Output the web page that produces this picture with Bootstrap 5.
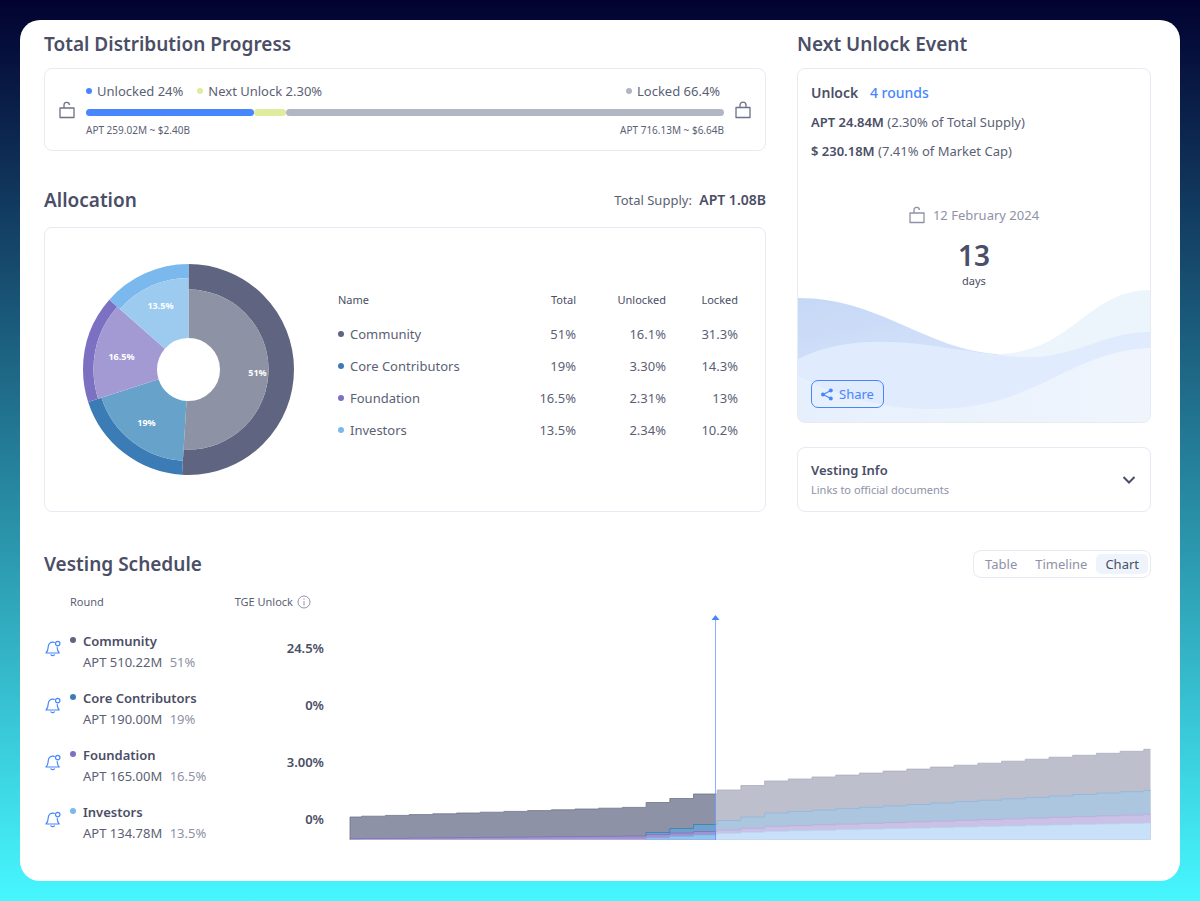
<!DOCTYPE html>
<html lang="en">
<head>
<meta charset="utf-8">
<meta name="viewport" content="width=device-width, initial-scale=1">
<title>APT Token Vesting</title>
<link href="https://cdn.jsdelivr.net/npm/bootstrap@5.3.0/dist/css/bootstrap.min.css" rel="stylesheet">
<style>
:root{--ink:#4a4e66;--soft:#5b5f75;--muted:#8e92a6;--line:#e5eaf3;--blue:#4786ff;
--community:#5f6480;--core:#3c7cb6;--foundation:#7b70c2;--investors:#7bb8ee}
body{font-family:"Noto Sans",sans-serif;font-size:13px;line-height:20px;color:var(--soft);
background:linear-gradient(#020230,#46f7ff);min-height:100vh;padding:20px}
.panel{background:#fff;border-radius:20px;padding:12px 29px 30px 24px}
h2{font-size:19px;line-height:24px;font-weight:600;color:var(--ink);margin:0}
.overview{display:grid;grid-template-columns:1fr;gap:31px}
.box{border:1px solid var(--line);border-radius:8px;background:#fff}
.strong{font-weight:600;color:var(--ink)}
.soft-note{color:var(--muted)}
.tiny{font-size:10px;line-height:16px;margin-top:6px}
.hd{font-size:11px;font-weight:400}
.dot{width:6px;height:6px;border-radius:50%;display:inline-block;flex:none}
.supply-progress{padding:12px 14px;gap:11px}
.legend-set{gap:14px}
.legend-item{display:flex;align-items:center;gap:5px}
.track{height:7px}
.track span{border-radius:4px}
.locked-col{width:98px}
.c-unlocked{background:var(--blue)}.c-next{background:#dfeb9d}.c-locked{background:#b1b6c5}
.c-community{background:var(--community)}.c-core{background:var(--core)}
.c-foundation{background:var(--foundation)}.c-investors{background:var(--investors)}
.gap-box{margin-top:12px}
.alloc-head{margin-top:37px;margin-bottom:15px}
.alloc-box{min-height:285px;padding:20px 26px 20px 38px;gap:43px}
.donut{width:211px;flex:none}
.donut text{font-size:9px;font-weight:700;fill:#fff;text-anchor:middle}
.alloc-table{width:100%;margin-bottom:5px}
.alloc-table thead th{padding-bottom:8px;color:var(--ink)}
.alloc-table tbody tr{height:32px}
.alloc-table .dot{margin-right:6px;vertical-align:2px}
.event{min-height:355px;padding:14px 13px;overflow:hidden}
.event-lines{gap:9px}
.event .waves{left:0;bottom:0;width:100%;height:133px}
.lead-line{font-size:14px}
.countdown{margin-top:44px;margin-bottom:24px}
.days-num{font-size:28px;line-height:34px;margin-top:13px}
.days-txt{font-size:11px;line-height:18px;color:var(--ink)}
a{color:var(--blue);text-decoration:none}
.share{border:1px solid var(--blue);color:var(--blue);border-radius:7px;font-size:13px;line-height:20px;padding:3px 9px;gap:6px;background:transparent}
.docs{margin-top:24px;padding:11px 13px;color:inherit;min-height:65px}
.docs small{font-size:11px}
.schedule-head{margin-top:38px;margin-bottom:10px}
.views{padding:3px 2px}
.views button{border:0;background:none;border-radius:5px;padding:0 9px;line-height:20px;color:var(--muted)}
.views button.active{background:#eff4fc;color:var(--ink)}
.schedule{display:grid;grid-template-columns:1fr;gap:24px}
.rounds{width:100%;max-width:281px}
.rounds th{padding:4px 0 11px}
.rounds .tge{padding-right:14px}
.rounds tbody tr{height:57px}
.rounds .pct{padding-bottom:9px}
.rounds .bell{width:26px;padding:0 0 10px 1px}
.rounds .bell button{border:0;background:none;padding:0;display:block}
.round-line{line-height:21px}
.round-cell{padding-left:13px;position:relative}
.round-cell .dot{position:absolute;left:0;top:14px}
.hist{width:100%;height:auto;display:block}
svg{flex:none}
@media(min-width:992px){
.overview{grid-template-columns:722fr 354fr}
.schedule{grid-template-columns:281px 1fr}}
</style>
</head>
<body>
<svg class="d-none">
<symbol id="open-lock" viewBox="0 0 16 18"><path d="M1 7h14v9.500H1zM5 7V4.200a2.700 2.700 0 0 1 5.400-.2" fill="none" stroke="currentColor" stroke-width="1.300" stroke-linejoin="round"/></symbol>
<symbol id="shut-lock" viewBox="0 0 16 18"><path d="M1 6.500h14V16.500H1zM5 6.500V4.200a3 3 0 0 1 6 0v2.300" fill="none" stroke="currentColor" stroke-width="1.300" stroke-linejoin="round"/></symbol>
<symbol id="bell-icon" viewBox="0 0 16 17"><path d="M9.300 2.400C5.500 1.400 3.300 3.800 3.200 7c-.1 3-.6 4.400-2.200 6h13.200c-1.300-1.300-1.900-2.800-2-5.500M6 14.800c.8 1 2.600 1 3.400 0" fill="none" stroke="#4786ff" stroke-width="1.200" stroke-linecap="round" stroke-linejoin="round"/><circle cx="12.700" cy="3.600" r="2.200" fill="none" stroke="#4786ff" stroke-width="1.200"/></symbol>
</svg>
<main class="panel">
<div class="overview">
<section class="d-flex flex-column">
<h2>Total Distribution Progress</h2>
<div class="box gap-box supply-progress d-flex align-items-center">
<svg width="16" height="18" color="#6d7189"><use href="#open-lock"/></svg>
<div class="flex-fill">
<div class="d-flex justify-content-between mb-2">
<div class="legend-set d-flex"><span class="legend-item"><i class="dot c-unlocked"></i>Unlocked 24%</span><span class="legend-item"><i class="dot c-next"></i>Next Unlock 2.30%</span></div>
<span class="locked-col legend-item"><i class="dot c-locked"></i>Locked 66.4%</span>
</div>
<div class="track d-flex"><span class="c-unlocked" style="width:26.4%"></span><span class="c-next" style="width:4.9%"></span><span class="c-locked" style="width:68.7%"></span></div>
<div class="tiny d-flex justify-content-between"><span>APT 259.02M ~ $2.40B</span><span>APT 716.13M ~ $6.64B</span></div>
</div>
<svg width="16" height="18" color="#6d7189"><use href="#shut-lock"/></svg>
</div>
<div class="alloc-head d-flex justify-content-between align-items-center"><h2>Allocation</h2><div>Total Supply: <span class="strong lead-line ms-1">APT 1.08B</span></div></div>
<div class="box alloc-box d-flex align-items-center flex-fill">
<svg class="donut" viewBox="-105.5 -105.5 211 211" role="img" aria-label="Allocation by round">
<g transform="rotate(-90)" fill="none">
<g stroke-dasharray="51 49"><circle r="92.750" pathLength="100" stroke="#5f6480" stroke-width="25.500"/><circle r="55.750" pathLength="100" stroke="#8e92a5" stroke-width="48.500"/></g>
<g stroke-dasharray="19 81" stroke-dashoffset="-51"><circle r="98.500" pathLength="100" stroke="#3c7cb6" stroke-width="14"/><circle r="61.500" pathLength="100" stroke="#66a2c9" stroke-width="60"/></g>
<g stroke-dasharray="16.500 83.500" stroke-dashoffset="-70"><circle r="100.250" pathLength="100" stroke="#7b70c2" stroke-width="10.500"/><circle r="63.250" pathLength="100" stroke="#a39ad4" stroke-width="63.500"/></g>
<g stroke-dasharray="13.500 86.500" stroke-dashoffset="-86.500"><circle r="98.500" pathLength="100" stroke="#7bb8ee" stroke-width="14"/><circle r="61.500" pathLength="100" stroke="#9dcbf0" stroke-width="60"/></g>
</g>
<text x="69" y="6">51%</text><text x="-42" y="56">19%</text><text x="-67" y="-10">16.5%</text><text x="-28" y="-61">13.5%</text>
</svg>
<table class="alloc-table">
<colgroup><col><col style="width:80px"><col style="width:90px"><col style="width:72px"></colgroup>
<thead><tr class="hd"><th class="fw-normal">Name</th><th class="fw-normal text-end">Total</th><th class="fw-normal text-end">Unlocked</th><th class="fw-normal text-end">Locked</th></tr></thead>
<tbody>
<tr><td><i class="dot c-community"></i>Community</td><td class="text-end">51%</td><td class="text-end">16.1%</td><td class="text-end">31.3%</td></tr>
<tr><td><i class="dot c-core"></i>Core Contributors</td><td class="text-end">19%</td><td class="text-end">3.30%</td><td class="text-end">14.3%</td></tr>
<tr><td><i class="dot c-foundation"></i>Foundation</td><td class="text-end">16.5%</td><td class="text-end">2.31%</td><td class="text-end">13%</td></tr>
<tr><td><i class="dot c-investors"></i>Investors</td><td class="text-end">13.5%</td><td class="text-end">2.34%</td><td class="text-end">10.2%</td></tr>
</tbody></table>
</div>
</section>
<section class="d-flex flex-column">
<h2>Next Unlock Event</h2>
<div class="box event gap-box position-relative d-flex flex-column">
<svg class="waves position-absolute" viewBox="0 0 354 133" preserveAspectRatio="none" aria-hidden="true">
<defs><linearGradient id="w" x1="0" y1="0" x2="0.4" y2="1"><stop offset="0" stop-color="#c5d8f6"/><stop offset="1" stop-color="#dce5fb"/></linearGradient>
<linearGradient id="w2" x1="0" y1="0" x2="1" y2="0"><stop offset="0" stop-color="#e6f0fc"/><stop offset="1" stop-color="#f0f5fd"/></linearGradient></defs>
<path d="M196 65C276 66 288 2 354 1V133H196z" fill="#ecf4fc"/>
<path d="M0 9C82 9 128 60 200 65L230 133H0z" fill="url(#w)"/>
<path d="M0 70C50 45 110 53 150 59C190 64 212 69 240 68C285 65 310 43 354 43V133H0z" fill="#e0ebfd"/>
<path d="M0 87C50 112 90 119 130 120C240 122 270 62 354 59V133H0z" fill="url(#w2)"/>
</svg>
<div class="event-lines d-flex flex-column position-relative">
<div class="lead-line"><span class="strong me-2">Unlock</span> <a class="fw-medium" href="#rounds">4 rounds</a></div>
<div><span class="strong">APT 24.84M</span> (2.30% of Total Supply)</div>
<div><span class="strong">$ 230.18M</span> (7.41% of Market Cap)</div>
</div>
<div class="countdown text-center position-relative">
<div class="soft-note d-flex justify-content-center align-items-center gap-2"><svg width="16" height="18"><use href="#open-lock"/></svg>12 February 2024</div>
<div class="days-num strong">13</div>
<div class="days-txt">days</div>
</div>
<button class="share align-self-start mt-auto d-flex align-items-center position-relative" type="button"><svg width="12" height="13" viewBox="0 0 12 13" fill="#4786ff"><path d="M10 2.500 2 6.500l8 4" fill="none" stroke="#4786ff" stroke-width="1.200"/><circle cx="9.800" cy="2.500" r="2"/><circle cx="2" cy="6.500" r="2"/><circle cx="9.800" cy="10.500" r="2"/></svg>Share</button>
</div>
<button class="box docs d-flex align-items-center justify-content-between text-start" type="button" aria-expanded="false">
<span><span class="strong d-block">Vesting Info</span><small class="soft-note d-block">Links to official documents</small></span>
<svg width="16" height="10" viewBox="0 0 16 10"><path d="M2.500 2 8 7.500 13.500 2" fill="none" stroke="#4a4e6c" stroke-width="2"/></svg>
</button>
</section>
</div>
<section id="rounds">
<div class="schedule-head d-flex justify-content-between align-items-center">
<h2>Vesting Schedule</h2>
<div class="views box d-flex" role="group" aria-label="View"><button type="button">Table</button><button type="button">Timeline</button><button type="button" class="active">Chart</button></div>
</div>
<div class="schedule">
<div>
<table class="rounds">
<thead><tr class="hd"><th></th><th class="fw-normal">Round</th><th class="fw-normal text-end tge"><span class="d-inline-flex align-items-center gap-1">TGE Unlock<svg width="14" height="14" viewBox="0 0 14 14" fill="none" stroke="#8e92a6"><circle cx="7" cy="7" r="6"/><path d="M7 6v4.500M7 3.500v1.200"/></svg></span></th></tr></thead>
<tbody>
<tr><td class="bell"><button type="button" aria-label="Notify: Community"><svg width="16" height="17"><use href="#bell-icon"/></svg></button></td><td class="round-cell round-line"><i class="dot c-community"></i><div class="strong">Community</div>APT 510.22M <span class="soft-note ms-1">51%</span></td><td class="pct strong text-end">24.5%</td></tr>
<tr><td class="bell"><button type="button" aria-label="Notify: Core Contributors"><svg width="16" height="17"><use href="#bell-icon"/></svg></button></td><td class="round-cell round-line"><i class="dot c-core"></i><div class="strong">Core Contributors</div>APT 190.00M <span class="soft-note ms-1">19%</span></td><td class="pct strong text-end">0%</td></tr>
<tr><td class="bell"><button type="button" aria-label="Notify: Foundation"><svg width="16" height="17"><use href="#bell-icon"/></svg></button></td><td class="round-cell round-line"><i class="dot c-foundation"></i><div class="strong">Foundation</div>APT 165.00M <span class="soft-note ms-1">16.5%</span></td><td class="pct strong text-end">3.00%</td></tr>
<tr><td class="bell"><button type="button" aria-label="Notify: Investors"><svg width="16" height="17"><use href="#bell-icon"/></svg></button></td><td class="round-cell round-line"><i class="dot c-investors"></i><div class="strong">Investors</div>APT 134.78M <span class="soft-note ms-1">13.5%</span></td><td class="pct strong text-end">0%</td></tr>
</tbody></table>
</div>
<svg class="hist" id="hist" viewBox="0 0 802 252" role="img" aria-label="Unlocked supply over time by round">
<defs><clipPath id="past"><path d="M0 0H366.500V252H0z"/></clipPath><clipPath id="future"><path d="M366.500 0H802V252H366.500z"/></clipPath></defs>
</svg>
</div>
</section>
</main>
<script src="https://cdn.jsdelivr.net/npm/bootstrap@5.3.0/dist/js/bootstrap.bundle.min.js"></script>
<script>
// Cumulative stacked heights: 13 cliff months, a six-month ramp, then linear release.
const series = [
  {start: 22.5, early: 0.8, ramp: [37, 41, 45.5, 49.5, 54, 58.5], late: 1.98, past: ['#8e92a6', '#6f738c'], future: ['#bdc0cc', '#a9adbe']},
  {start: 0, early: 0, ramp: [7, 11, 15, 19, 22.5, 26.5], late: 1.42, past: ['#6fa2cb', '#3c7cb6'], future: ['#adc6e0', '#8db6dc']},
  {start: 0.8, early: 0.22, ramp: [5, 6.5, 8, 9.5, 11.2, 13.2], late: 0.75, past: ['#a093cf', '#7b70c2'], future: ['#c9c1e6', '#bba9dc']},
  {start: 0, early: 0, ramp: [1.6, 3, 4.4, 6, 7.2, 8.2], late: 0.52, past: ['#8fc6ef', '#7bb8ee'], future: ['#c8e1f9', '#b5d5f4']}
];
const svg = document.getElementById('hist'), base = 251.5;
function add(tag, attrs) {
  const el = document.createElementNS('http://www.w3.org/2000/svg', tag);
  for (const k in attrs) el.setAttribute(k, attrs[k]);
  svg.appendChild(el);
}
for (const s of series) {
  const flat = s.start === 0;
  let d = '';
  for (let k = -1; k < 34; k++) {
    if (flat && k < 12) continue;
    const x = k < 0 ? 1 : 12.7 + 23.7 * k, x2 = k === 33 ? 801.5 : 12.7 + 23.7 * (k + 1);
    const h = k < 12 ? s.start + s.early * (k + 1) : k < 18 ? s.ramp[k - 12] : s.ramp[5] + s.late * (k - 17);
    d += (d ? 'V' : `M${x} ${base}V`) + (base - h).toFixed(1) + 'H' + x2.toFixed(1);
  }
  for (const era of ['past', 'future']) {
    add('path', {d: d + `V${base}z`, fill: s[era][0], 'clip-path': `url(#${era})`});
    add('path', {d, fill: 'none', stroke: s[era][1], 'stroke-width': 0.8, 'clip-path': `url(#${era})`});
  }
}
add('path', {d: 'M366.500 30V252', stroke: '#4786ff', 'stroke-opacity': 0.65});
add('path', {d: 'M362.500 32h8l-4-5z', fill: '#4786ff'});
</script>
</body>
</html>
